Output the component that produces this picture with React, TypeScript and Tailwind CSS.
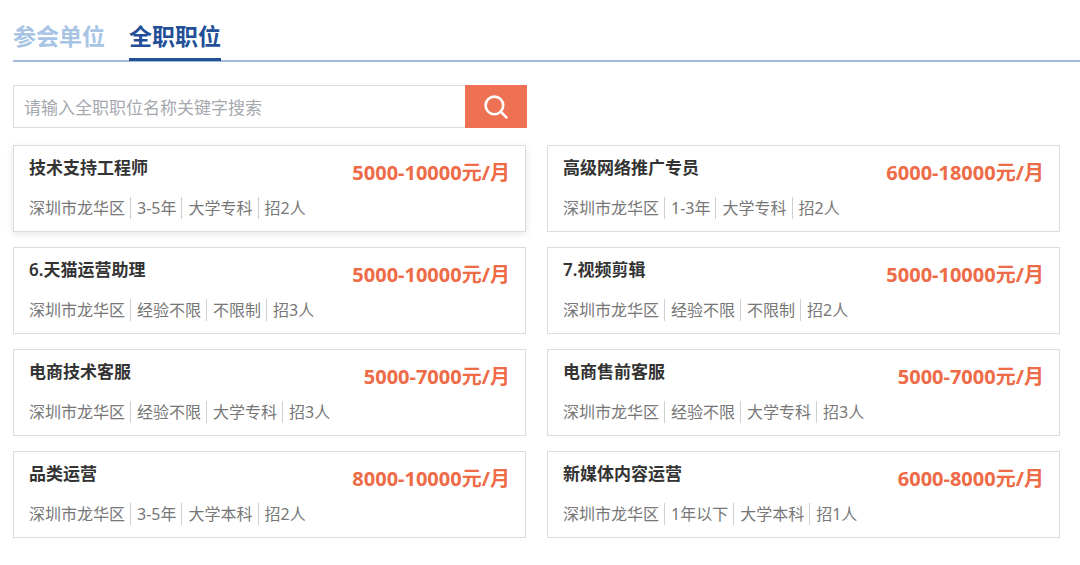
import React, { useState } from "react";

type Job = {
  no?: string;
  title: string;
  salary: string;
  tags: string[];
  raised?: boolean;
};

const tabs = ["参会单位", "全职职位"];

const jobs: Job[] = [
  { title: "技术支持工程师", salary: "5000-10000元/月", tags: ["深圳市龙华区", "3-5年", "大学专科", "招2人"], raised: true },
  { title: "高级网络推广专员", salary: "6000-18000元/月", tags: ["深圳市龙华区", "1-3年", "大学专科", "招2人"] },
  { no: "6.", title: "天猫运营助理", salary: "5000-10000元/月", tags: ["深圳市龙华区", "经验不限", "不限制", "招3人"] },
  { no: "7.", title: "视频剪辑", salary: "5000-10000元/月", tags: ["深圳市龙华区", "经验不限", "不限制", "招2人"] },
  { title: "电商技术客服", salary: "5000-7000元/月", tags: ["深圳市龙华区", "经验不限", "大学专科", "招3人"] },
  { title: "电商售前客服", salary: "5000-7000元/月", tags: ["深圳市龙华区", "经验不限", "大学专科", "招3人"] },
  { title: "品类运营", salary: "8000-10000元/月", tags: ["深圳市龙华区", "3-5年", "大学本科", "招2人"] },
  { title: "新媒体内容运营", salary: "6000-8000元/月", tags: ["深圳市龙华区", "1年以下", "大学本科", "招1人"] },
];

function JobCard({ job }: { job: Job }) {
  return (
    <li
      className={`flex items-start justify-between border border-[#dcdcdc] bg-white px-[15px] pt-[9px] pb-3 ${
        job.raised ? "shadow-[0_2px_8px_rgba(0,0,0,0.1)]" : ""
      }`}
    >
      <div>
        <h2 className="text-[17px] leading-[26px] font-bold text-[#333]">
          {job.no && <span className="font-semibold">{job.no}</span>}
          {job.title}
        </h2>
        <ul className="mt-4 flex items-center divide-x divide-[#d0d0d0] text-base text-[#777]">
          {job.tags.map((tag) => (
            <li key={tag} className="pr-[5px] pl-[6px] leading-[22px] first:pl-0">
              {tag}
            </li>
          ))}
        </ul>
      </div>
      <p className="pt-1 text-xl leading-[28px] font-bold text-[#ee6b47]">{job.salary}</p>
    </li>
  );
}

export default function App() {
  const [active, setActive] = useState(tabs[1]);

  return (
    <main className="min-h-screen bg-white pt-4 pb-7 pl-[13px] font-['Noto_Sans','Noto_Sans_CJK_SC',sans-serif]">
      <nav className="flex gap-6 border-b-2 border-[#a3b9dc]">
        {tabs.map((tab) => (
          <button
            key={tab}
            type="button"
            onClick={() => setActive(tab)}
            className={`-mb-px border-b-3 pb-[2px] text-[23px] leading-10 font-bold ${
              active === tab ? "border-[#234f98] text-[#234f98]" : "border-transparent text-[#a8c4e5]"
            }`}
          >
            {tab}
          </button>
        ))}
      </nav>

      <form className="mt-[23px] flex h-[43px] max-w-[514px]" onSubmit={(e) => e.preventDefault()}>
        <input
          type="text"
          aria-label="请输入全职职位名称关键字搜索"
          placeholder="请输入全职职位名称关键字搜索"
          className="min-w-0 flex-1 border border-r-0 border-[#dcdcdc] px-[10px] pt-[2px] text-[17px] outline-none placeholder:text-[#a5a8ae]"
        />
        <button type="submit" aria-label="搜索" className="flex w-[62px] items-center justify-center bg-[#ed7152]">
          <svg width="24" height="24" viewBox="0 0 24 24" fill="none" stroke="white" strokeWidth="2.6" strokeLinecap="round">
            <circle cx="10.4" cy="10.4" r="8.8" />
            <path d="M17 17l5.4 5.4" />
          </svg>
        </button>
      </form>

      <ul className="mt-[17px] mr-5 grid grid-cols-2 gap-x-[21px] gap-y-[15px]">
        {jobs.map((job) => (
          <JobCard key={job.title} job={job} />
        ))}
      </ul>
    </main>
  );
}
